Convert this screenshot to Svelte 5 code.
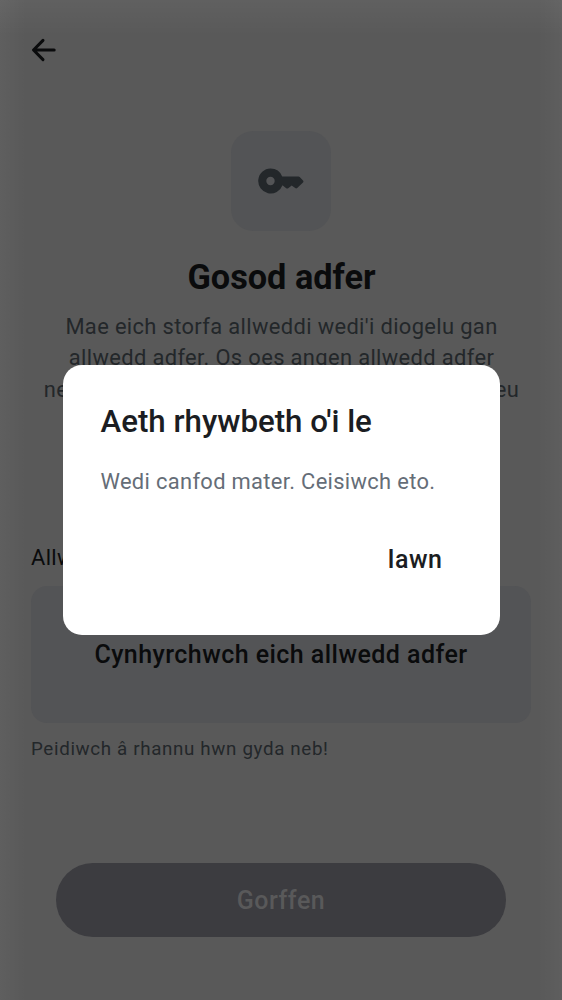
<script lang="ts">
  const paragraph = [
    "Mae eich storfa allweddi wedi'i diogelu gan",
    'allwedd adfer. Os oes angen allwedd adfer',
    'newydd arnoch ar ôl gosod, gallwch ei hail-greu'
  ];
</script>

<div class="screen">
  <header>
    <button class="back" aria-label="Yn ôl">
      <svg width="26" height="24" viewBox="0 0 26 24" fill="none" stroke="#0a0b0c" stroke-width="3" stroke-linecap="round" stroke-linejoin="round">
        <path d="M12 2.4 2.5 12l9.5 9.6M3 12H23.2" />
      </svg>
    </button>
  </header>

  <main>
    <div class="badge">
      <svg width="46" height="26" viewBox="0 0 46 26">
        <path fill="#23272a" fill-rule="evenodd" d="M12.5.5A12.5 12.5 0 0 1 24.2 8.5H40.5Q41.2 8.5 41.7 9L45 12.4Q45.9 13.4 45 14.4L39.2 20Q38.2 20.8 37.2 20L33.7 17.4 30.2 20.2Q29.2 21 28.2 20.2L24.5 17.2A12.5 12.5 0 1 1 12.5.5ZM12.5 8.8A4.2 4.2 0 1 0 12.5 17.2A4.2 4.2 0 1 0 12.5 8.8Z" />
      </svg>
    </div>
    <h1>Gosod adfer</h1>
    <p class="intro">
      {#each paragraph as line}<span>{line}</span>{/each}
    </p>
    <section>
      <div class="label">Allwedd adfer</div>
      <button class="generate">Cynhyrchwch eich allwedd adfer</button>
      <div class="hint">Peidiwch â rhannu hwn gyda neb!</div>
    </section>
    <button class="finish" disabled>Gorffen</button>
  </main>

  <div class="overlay">
    <div class="dialog" role="alertdialog" aria-modal="true" aria-labelledby="dialog-title">
      <h2 id="dialog-title">Aeth rhywbeth o'i le</h2>
      <p>Wedi canfod mater. Ceisiwch eto.</p>
      <div class="actions"><button>Iawn</button></div>
    </div>
  </div>
</div>

<style>
  :global(body) { margin: 0; background: #595959; }
  .screen {
    position: relative;
    box-sizing: border-box;
    width: 562px;
    height: 1000px;
    overflow: hidden;
    background:
      linear-gradient(180deg, rgba(255, 255, 255, 0.045), transparent 36px),
      linear-gradient(90deg, rgba(255, 255, 255, 0.035), transparent 26px, transparent 538px, rgba(255, 255, 255, 0.03)),
      #595959;
    font-family: Roboto, sans-serif;
    color: #0a0b0c;
  }
  button { border: 0; padding: 0; margin: 0; background: none; font: inherit; color: inherit; }
  h1, h2, p { margin: 0; }
  svg { display: block; }
  header { height: 93px; padding: 38px 31px 0; box-sizing: border-box; }
  .back { display: block; }
  main { display: flex; flex-direction: column; align-items: center; padding: 38px 31px 0; }
  .badge {
    display: grid;
    place-items: center;
    width: 100px;
    height: 100px;
    border-radius: 22px;
    background: #535456;
  }
  h1 { margin-top: 24px; padding-left: 1px; font-size: 34.3px; line-height: 44px; font-weight: 700; white-space: nowrap; }
  .intro {
    margin-top: 12px;
    height: 125px;
    padding-left: 1px;
    font-size: 21.9px;
    line-height: 31.25px;
    letter-spacing: 0.36px;
    color: #23272a;
    text-align: center;
  }
  .intro span { display: block; white-space: nowrap; }
  section { width: 500px; margin-top: 106px; }
  .label { font-size: 21.9px; line-height: 31px; letter-spacing: 0.36px; }
  .generate {
    display: block;
    width: 500px;
    height: 137px;
    margin-top: 13px;
    border-radius: 16px;
    background: #535456;
    font-size: 25px;
    font-weight: 500;
    letter-spacing: 0.45px;
  }
  .hint { margin-top: 14px; font-size: 18.75px; line-height: 25px; letter-spacing: 0.65px; color: #23272a; }
  .finish {
    width: 450px;
    height: 74px;
    margin-top: 101px;
    border-radius: 38px;
    background: #3c3c40;
    color: #59595a;
    font-size: 25px;
    font-weight: 500;
    letter-spacing: 0.5px;
  }
  .overlay { position: absolute; inset: 0; display: grid; place-items: center; }
  .dialog {
    box-sizing: border-box;
    width: 437px;
    height: 270px;
    padding: 37px 38px 0;
    border-radius: 19px;
    background: #fff;
    color: #1b1d22;
  }
  h2 { font-size: 31.25px; line-height: 40px; font-weight: 500; white-space: nowrap; }
  .dialog p { margin-top: 24px; font-size: 21.9px; line-height: 31px; letter-spacing: 0.33px; color: #656d77; white-space: nowrap; }
  .actions { display: flex; justify-content: flex-end; margin-top: 31px; padding-right: 19px; }
  .actions button { height: 62px; font-size: 25px; font-weight: 500; letter-spacing: 0.5px; }
</style>
